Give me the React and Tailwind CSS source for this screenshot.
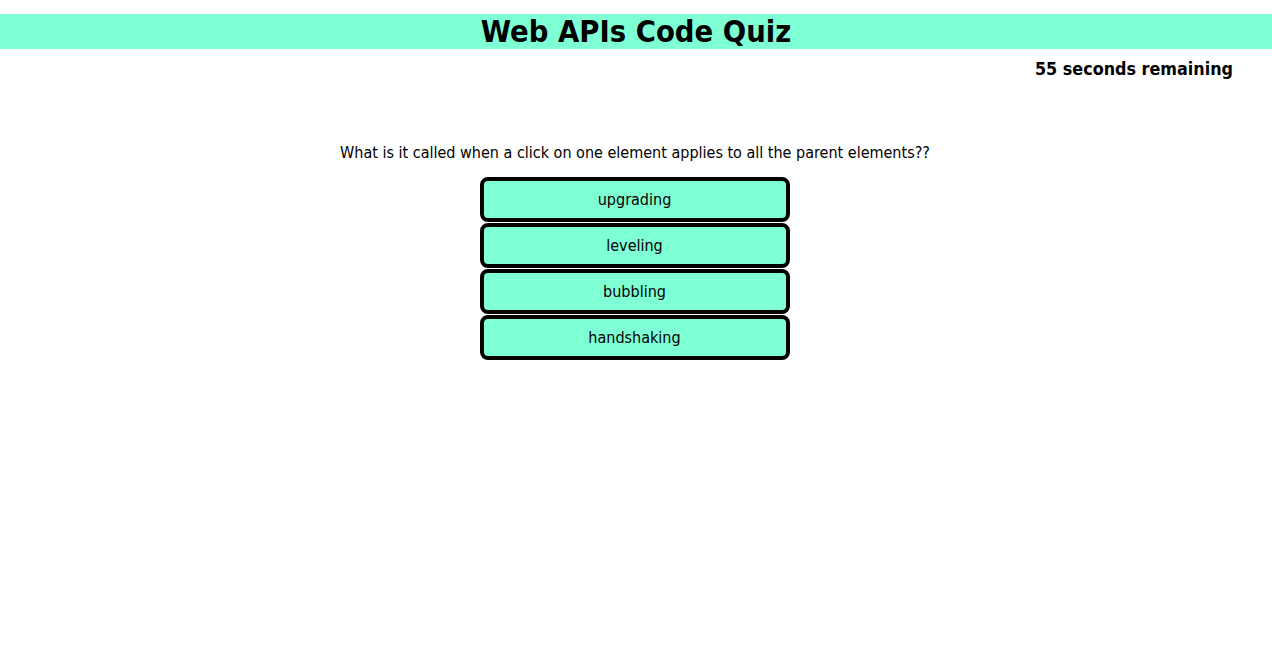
export default function App() {
  const answers = ["upgrading", "leveling", "bubbling", "handshaking"];
  return (
    <div className="min-h-screen bg-white text-black" style={{ fontFamily: '"DejaVu Sans Condensed", "DejaVu Sans", sans-serif', fontStretch: "condensed" }}>
      <header className="pt-[14px]">
        <h1 className="bg-[#7fffd4] text-center text-[30.6px] font-bold leading-[35px] h-[35px]">Web APIs Code Quiz</h1>
      </header>
      <div className="flex justify-end pr-[39px] pt-[9px]">
        <p className="text-[17.8px] font-bold leading-[21px]">55 seconds remaining</p>
      </div>
      <main className="flex flex-col items-center pt-[64px]">
        <p className="text-[16px] leading-[19px] mr-[2px]">What is it called when a click on one element applies to all the parent elements??</p>
        <div className="mt-[15px] mr-[3px] flex flex-col gap-[1px]">
          {answers.map((a) => (
            <button key={a} className="w-[310px] h-[45px] rounded-[8px] border-4 border-black bg-[#7fffd4] text-[16px] leading-[19px]">
              {a}
            </button>
          ))}
        </div>
      </main>
    </div>
  );
}
